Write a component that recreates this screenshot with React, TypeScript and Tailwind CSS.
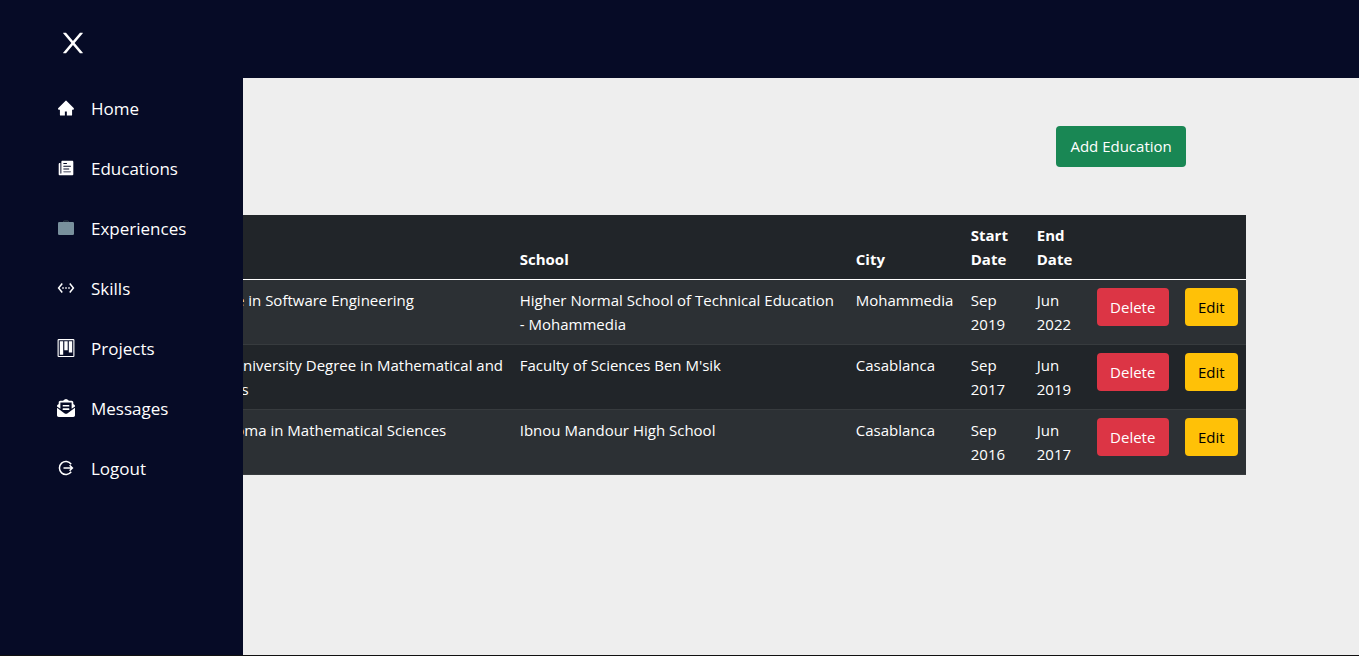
import type { ReactNode } from "react";
import { AiFillHome } from "react-icons/ai";
import { FaEnvelopeOpenText } from "react-icons/fa";
import { IoIosPaper } from "react-icons/io";
import { MdSettingsEthernet } from "react-icons/md";

function CloseIcon() {
  return (
    <svg viewBox="0 0 1024 1024" width="32" height="32" fill="currentColor" aria-hidden="true">
      <path d="M563.8 512l262.5-312.9c4.4-5.2.7-13.1-6.1-13.1h-79.8c-4.7 0-9.2 2.1-12.3 5.7L511.6 449.8 295.1 191.7c-3-3.6-7.5-5.7-12.3-5.7H203c-6.8 0-10.5 7.9-6.1 13.1L459.4 512 196.9 824.9A7.95 7.95 0 0 0 203 838h79.8c4.7 0 9.2-2.1 12.3-5.7l216.5-258.1 216.5 258.1c3 3.6 7.5 5.7 12.3 5.7h79.8c6.8 0 10.5-7.9 6.1-13.1L563.8 512z" />
    </svg>
  );
}

function BriefcaseIcon() {
  return (
    <svg viewBox="0 0 18 18" width="18" height="18" aria-hidden="true">
      <path d="M6.5 3.5V2.6q0-.6.6-.6h3.8q.6 0 .6.6v.9" fill="none" stroke="#37474f" strokeWidth="1" />
      <rect x="1" y="3" width="16" height="13" rx="1.2" fill="#78909c" />
    </svg>
  );
}

function BoardIcon() {
  return (
    <svg viewBox="0 0 15 16" width="18" height="18" fill="currentColor" fillRule="evenodd" aria-hidden="true">
      <path d="M10 12h3V2h-3v10zm-4-2h3V2H6v8zm-4 4h3V2H2v12zm-1 1h13V1H1v14zM14 0H1a1 1 0 0 0-1 1v14a1 1 0 0 0 1 1h13a1 1 0 0 0 1-1V1a1 1 0 0 0-1-1z" />
    </svg>
  );
}

function LogoutIcon() {
  return (
    <svg viewBox="0 0 18 18" width="18" height="18" fill="none" stroke="currentColor" strokeWidth="1.5" aria-hidden="true">
      <path d="M14.2 5.2A6.5 6.5 0 1 0 14.2 12.8" />
      <path d="M6.5 9h9M12.6 6.3 15.4 9l-2.8 2.7" />
    </svg>
  );
}

const links: { label: string; icon: ReactNode }[] = [
  { label: "Home", icon: <AiFillHome size={18} /> },
  { label: "Educations", icon: <IoIosPaper size={18} /> },
  { label: "Experiences", icon: <BriefcaseIcon /> },
  { label: "Skills", icon: <MdSettingsEthernet size={18} /> },
  { label: "Projects", icon: <BoardIcon /> },
  { label: "Messages", icon: <FaEnvelopeOpenText size={18} /> },
  { label: "Logout", icon: <LogoutIcon /> },
];

const educations = [
  {
    title: "Engineers Degree in Software Engineering",
    school: "Higher Normal School of Technical Education - Mohammedia",
    city: "Mohammedia",
    start: "Sep 2019",
    end: "Jun 2022",
  },
  {
    title: "Undergraduate University Degree in Mathematical and Chemical Sciences",
    school: "Faculty of Sciences Ben M'sik",
    city: "Casablanca",
    start: "Sep 2017",
    end: "Jun 2019",
  },
  {
    title: "High School Diploma in Mathematical Sciences",
    school: "Ibnou Mandour High School",
    city: "Casablanca",
    start: "Sep 2016",
    end: "Jun 2017",
  },
];

function Sidebar() {
  return (
    <aside className="absolute inset-y-0 left-0 w-[243px] bg-[#060b26] text-white">
      <button type="button" aria-label="Close menu" className="mt-[27px] ml-[57px] block">
        <CloseIcon />
      </button>
      <nav className="mt-[19px]">
        <ul>
          {links.map(({ label, icon }) => (
            <li key={label}>
              <a href="#" className="flex h-[60px] items-center gap-4 pl-[57px] text-[17px]">
                <span className="flex w-[18px] justify-center">{icon}</span>
                <span className="pt-0.5">{label}</span>
              </a>
            </li>
          ))}
        </ul>
      </nav>
    </aside>
  );
}

function EducationTable() {
  return (
    <table className="w-full table-fixed border-collapse bg-[#212529] text-left text-[15px] leading-6 text-white">
      <colgroup>
        <col />
        <col className="w-[336px]" />
        <col className="w-[115px]" />
        <col className="w-[66px]" />
        <col className="w-[60px]" />
        <col className="w-[88px]" />
        <col className="w-[69px]" />
      </colgroup>
      <thead>
        <tr className="border-b border-white align-bottom">
          <th className="p-2">Title</th>
          <th className="p-2">School</th>
          <th className="p-2">City</th>
          <th className="p-2">Start Date</th>
          <th className="p-2">End Date</th>
          <td />
          <td />
        </tr>
      </thead>
      <tbody>
        {educations.map((item) => (
          <tr key={item.title} className="border-b border-[#373b3e] align-top odd:bg-[#2c3034]">
            <td className="p-2">{item.title}</td>
            <td className="p-2">{item.school}</td>
            <td className="p-2">{item.city}</td>
            <td className="p-2">{item.start}</td>
            <td className="p-2">{item.end}</td>
            <td className="p-2">
              <button type="button" className="h-[38px] w-full rounded bg-[#dc3545]">
                Delete
              </button>
            </td>
            <td className="p-2">
              <button type="button" className="h-[38px] w-full rounded bg-[#ffc107] text-black">
                Edit
              </button>
            </td>
          </tr>
        ))}
      </tbody>
    </table>
  );
}

export default function App() {
  return (
    <div className="relative flex min-h-screen flex-col border-b border-[#111111] bg-[#eeeeee] font-['Open_Sans','Noto_Sans',sans-serif]">
      <header className="h-[78px] bg-[#060b26]" />
      <main className="mx-auto w-10/12 pt-12">
        <div className="flex justify-end pr-[60px]">
          <button type="button" className="h-[41px] rounded bg-[#198754] px-3.5 text-[15px] text-white">
            Add Education
          </button>
        </div>
        <div className="mt-12">
          <EducationTable />
        </div>
      </main>
      <Sidebar />
    </div>
  );
}
